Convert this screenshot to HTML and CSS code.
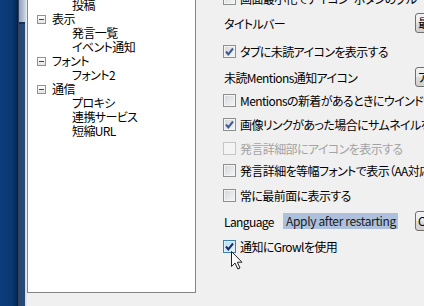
FILE: index.html
```html
<!DOCTYPE html>
<html lang="ja">
<head>
    <meta charset="UTF-8">
    <title>設定</title>
    <link rel="stylesheet" href="styles.css">
</head>
<body>
    <div class="window">
        <div class="side">
            <div class="desk"></div>
            <div class="edge"></div>
            <div class="rail"><div class="thumb"></div></div>
            <div class="gap"></div>
        </div>
        <div class="tree-col">
            <div class="tree">
                <div class="node child">投稿</div>
                <div class="node parent"><span class="expander"></span>表示</div>
                <div class="node child">発言一覧</div>
                <div class="node child">イベント通知</div>
                <div class="node parent"><span class="expander"></span>フォント</div>
                <div class="node child">フォント2</div>
                <div class="node parent"><span class="expander"></span>通信</div>
                <div class="node child">プロキシ</div>
                <div class="node child">連携サービス</div>
                <div class="node child">短縮URL</div>
            </div>
        </div>
        <div class="settings">
            <div class="row check"><span class="box"></span>画面最小化でアイコン・ボタンのグループをせず</div>
            <div class="row field"><span class="label">タイトルバー</span><span class="combo">最新バージョン</span></div>
            <div class="row check"><span class="box checked"><svg viewBox="0 0 11 11"><path d="M2 5.5 L4.3 8.3 L9 2.5"/></svg></span>タブに未読アイコンを表示する</div>
            <div class="row field"><span class="label">未読Mentions通知アイコン</span><span class="button">アイコン変更</span></div>
            <div class="row check"><span class="box"></span>Mentionsの新着があるときにウインドウを点滅する</div>
            <div class="row check"><span class="box checked"><svg viewBox="0 0 11 11"><path d="M2 5.5 L4.3 8.3 L9 2.5"/></svg></span>画像リンクがあった場合にサムネイルを表示する</div>
            <div class="row check disabled"><span class="box"></span>発言詳細部にアイコンを表示する</div>
            <div class="row check"><span class="box"></span>発言詳細を等幅フォントで表示（AA対応機能）</div>
            <div class="row check"><span class="box"></span>常に最前面に表示する</div>
            <div class="row field"><span class="lang">Language</span><span class="note">Apply after restarting</span><span class="combo">OS Default</span></div>
            <div class="row check"><span class="box checked hover"><svg viewBox="0 0 11 11"><path d="M2 5.5 L4.3 8.3 L9 2.5"/></svg></span>通知にGrowlを使用</div>
        </div>
    </div>
    <svg class="cursor" width="13" height="19" viewBox="0 0 13 19">
        <path d="M0.5 0.5 L0.5 15.5 L4 12 L6.8 18 L9 17 L6.3 11.2 L11 11.2 Z"/>
    </svg>
</body>
</html>
```

FILE: styles.css
```css
body {
    margin: 0;
    background: #f0f0f0;
    font-family: "Noto Sans CJK JP", "Noto Sans", sans-serif;
    font-size: 12px;
    font-feature-settings: "palt";
    letter-spacing: -0.6px;
    color: #000;
    overflow: hidden;
    height: 306px;
    position: relative;
}
.window {
    display: flex;
    height: 306px;
}
.side {
    display: flex;
    flex: none;
    height: 306px;
}
.desk {
    width: 17px;
    background: linear-gradient(to right, #0c3d7c, #0a3874 12px, #06264f);
}
.edge {
    width: 2px;
    background: linear-gradient(to right, #020d1c, #3d5474);
}
.rail {
    width: 6px;
    background: #294873;
}
.thumb {
    height: 22px;
    background: linear-gradient(to right, #8ea2bd, #c3cfdd);
    border-bottom: 2px solid #17315a;
}
.gap {
    width: 2px;
    background: linear-gradient(to right, #c7d2e0, #eef0f3);
}
.tree-col {
    flex: none;
    width: 169px;
}
.tree {
    margin-top: -20px;
    height: 313px;
    box-sizing: border-box;
    border: 1px solid #848484;
    background: #fff;
    padding-top: 16px;
}
.node {
    display: flex;
    align-items: center;
    height: 14px;
    white-space: nowrap;
}
.node.parent {
    padding-left: 9px;
}
.node.child {
    padding-left: 44px;
}
.expander {
    width: 7px;
    height: 7px;
    margin: 2px 6px 0 0;
    border: 1px solid #929292;
    background: linear-gradient(#fff, #e4e4e4);
    position: relative;
}
.expander::after {
    content: "";
    position: absolute;
    left: 1px;
    top: 3px;
    width: 5px;
    height: 1px;
    background: #444;
}
.settings {
    flex: none;
    width: 300px;
    padding-left: 27px;
    margin-top: -14px;
    display: grid;
    grid-template-rows: 24px 26px 30px 22px 24px 24px 24px 20px 30px 22px 28px;
    align-content: start;
}
.row {
    display: flex;
    align-items: center;
    white-space: nowrap;
}
.box {
    flex: none;
    width: 11px;
    height: 11px;
    margin-right: 4px;
    border: 1px solid #8e8f8f;
    background: linear-gradient(135deg, #d3d6da, #f6f6f6);
    box-shadow: inset 0 0 0 1px #f4f4f4;
    display: flex;
}
.box svg {
    width: 11px;
    height: 11px;
}
.box path {
    fill: none;
    stroke: #3d5c93;
    stroke-width: 2;
}
.box.hover {
    border-color: #3c7fb1;
    background: linear-gradient(135deg, #b9dcf3, #eaf6fd);
    box-shadow: inset 0 0 0 1px #d9effb;
}
.box.hover path {
    stroke: #0f2f73;
}
.disabled {
    color: #a3a3a3;
}
.disabled .box {
    border-color: #c6c6c6;
    background: #f4f4f4;
}
.field .label {
    width: 191px;
    padding-left: 1px;
}
.combo, .button {
    flex: none;
    width: 80px;
    height: 18px;
    line-height: 18px;
    padding-left: 2px;
    border: 1px solid #707070;
    border-radius: 3px;
    background: linear-gradient(#f2f2f2, #ebebeb 50%, #dddddd 50%, #cfcfcf);
    overflow: hidden;
}
.lang {
    width: 59px;
    padding-left: 1px;
}
.note {
    flex: none;
    background: #adc1dc;
    color: #1a1a1a;
    letter-spacing: -0.35px;
    padding: 0 3px;
    height: 16px;
    line-height: 16px;
    width: 109px;
    margin-right: 17px;
}
.cursor {
    position: absolute;
    left: 231px;
    top: 251px;
}
.cursor path {
    fill: #fff;
    stroke: #222;
    stroke-width: 1;
}
```
